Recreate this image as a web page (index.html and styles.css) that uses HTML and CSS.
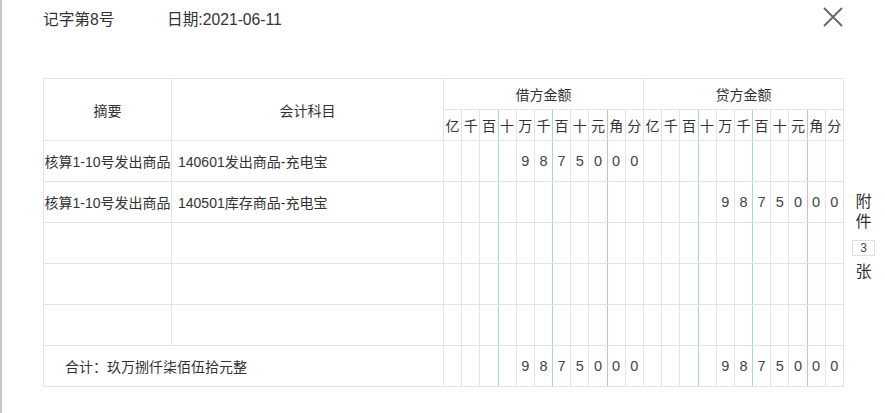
FILE: index.html
```html
<!DOCTYPE html>
<html lang="zh-CN">
<head>
<meta charset="utf-8">
<title>记字第8号</title>
<link rel="stylesheet" href="styles.css">
</head>
<body>
<div class="page">
  <div class="head">
    <span class="voucher-no">记字第8号</span>
    <span class="voucher-date">日期:2021-06-11</span>
    <span class="spacer"></span>
    <span class="close" aria-label="关闭">
      <svg width="20" height="20" viewBox="0 0 20 20"><path d="M1 1 L19 19 M19 1 L1 19" stroke="#666" stroke-width="1.8" fill="none"/></svg>
    </span>
  </div>
  <div class="body-row">
    <table class="voucher">
      <colgroup>
        <col class="c-sum"><col class="c-acc">
        <col class="c-d"><col class="c-d"><col class="c-d"><col class="c-d"><col class="c-d"><col class="c-d"><col class="c-d"><col class="c-d"><col class="c-d"><col class="c-d"><col class="c-d">
        <col class="c-d"><col class="c-d"><col class="c-d"><col class="c-d"><col class="c-d"><col class="c-d"><col class="c-d"><col class="c-d"><col class="c-d"><col class="c-d"><col class="c-d">
      </colgroup>
      <thead>
        <tr class="h1">
          <th rowspan="2" class="th-main">摘要</th>
          <th rowspan="2" class="th-main">会计科目</th>
          <th colspan="11" class="th-group">借方金额</th>
          <th colspan="11" class="th-group">贷方金额</th>
        </tr>
        <tr class="h2">
          <th class="u">亿</th><th class="u">千</th><th class="u b">百</th><th class="u">十</th><th class="u">万</th><th class="u b">千</th><th class="u">百</th><th class="u">十</th><th class="u r">元</th><th class="u">角</th><th class="u">分</th>
          <th class="u">亿</th><th class="u">千</th><th class="u b">百</th><th class="u">十</th><th class="u">万</th><th class="u b">千</th><th class="u">百</th><th class="u">十</th><th class="u r">元</th><th class="u">角</th><th class="u">分</th>
        </tr>
      </thead>
      <tbody>
        <tr class="row">
          <td class="sum">核算1-10号发出商品</td>
          <td class="acc">140601发出商品-充电宝</td>
          <td class="n"></td><td class="n"></td><td class="n b"></td><td class="n"></td><td class="n">9</td><td class="n b">8</td><td class="n">7</td><td class="n">5</td><td class="n r">0</td><td class="n">0</td><td class="n">0</td>
          <td class="n"></td><td class="n"></td><td class="n b"></td><td class="n"></td><td class="n"></td><td class="n b"></td><td class="n"></td><td class="n"></td><td class="n r"></td><td class="n"></td><td class="n"></td>
        </tr>
        <tr class="row">
          <td class="sum">核算1-10号发出商品</td>
          <td class="acc">140501库存商品-充电宝</td>
          <td class="n"></td><td class="n"></td><td class="n b"></td><td class="n"></td><td class="n"></td><td class="n b"></td><td class="n"></td><td class="n"></td><td class="n r"></td><td class="n"></td><td class="n"></td>
          <td class="n"></td><td class="n"></td><td class="n b"></td><td class="n"></td><td class="n">9</td><td class="n b">8</td><td class="n">7</td><td class="n">5</td><td class="n r">0</td><td class="n">0</td><td class="n">0</td>
        </tr>
        <tr class="row">
          <td class="sum"></td><td class="acc"></td>
          <td class="n"></td><td class="n"></td><td class="n b"></td><td class="n"></td><td class="n"></td><td class="n b"></td><td class="n"></td><td class="n"></td><td class="n r"></td><td class="n"></td><td class="n"></td>
          <td class="n"></td><td class="n"></td><td class="n b"></td><td class="n"></td><td class="n"></td><td class="n b"></td><td class="n"></td><td class="n"></td><td class="n r"></td><td class="n"></td><td class="n"></td>
        </tr>
        <tr class="row">
          <td class="sum"></td><td class="acc"></td>
          <td class="n"></td><td class="n"></td><td class="n b"></td><td class="n"></td><td class="n"></td><td class="n b"></td><td class="n"></td><td class="n"></td><td class="n r"></td><td class="n"></td><td class="n"></td>
          <td class="n"></td><td class="n"></td><td class="n b"></td><td class="n"></td><td class="n"></td><td class="n b"></td><td class="n"></td><td class="n"></td><td class="n r"></td><td class="n"></td><td class="n"></td>
        </tr>
        <tr class="row">
          <td class="sum"></td><td class="acc"></td>
          <td class="n"></td><td class="n"></td><td class="n b"></td><td class="n"></td><td class="n"></td><td class="n b"></td><td class="n"></td><td class="n"></td><td class="n r"></td><td class="n"></td><td class="n"></td>
          <td class="n"></td><td class="n"></td><td class="n b"></td><td class="n"></td><td class="n"></td><td class="n b"></td><td class="n"></td><td class="n"></td><td class="n r"></td><td class="n"></td><td class="n"></td>
        </tr>
        <tr class="row total">
          <td colspan="2" class="total-label">合计：玖万捌仟柒佰伍拾元整</td>
          <td class="n"></td><td class="n"></td><td class="n b"></td><td class="n"></td><td class="n">9</td><td class="n b">8</td><td class="n">7</td><td class="n">5</td><td class="n r">0</td><td class="n">0</td><td class="n">0</td>
          <td class="n"></td><td class="n"></td><td class="n b"></td><td class="n"></td><td class="n">9</td><td class="n b">8</td><td class="n">7</td><td class="n">5</td><td class="n r">0</td><td class="n">0</td><td class="n">0</td>
        </tr>
      </tbody>
    </table>
    <div class="attach">
      <span class="attach-txt">附</span>
      <span class="attach-txt">件</span>
      <span class="attach-box">3</span>
      <span class="attach-txt last">张</span>
    </div>
  </div>
</div>
</body>
</html>
```
FILE: styles.css
```css
html, body {
  margin: 0;
  padding: 0;
  background: #fff;
}
body {
  font-family: "Liberation Sans", "Noto Sans CJK SC", sans-serif;
  color: #333;
}
.page {
  height: 413px;
  box-sizing: border-box;
  border-left: 2px solid #c6c6c6;
  padding-left: 41px;
  padding-top: 7px;
}
.head {
  display: flex;
  align-items: flex-start;
  width: 800px;
  height: 26px;
}
.voucher-no, .voucher-date {
  font-size: 15.7px;
  line-height: 26px;
  color: #333;
}
.voucher-no {
  width: 124px;
}
.spacer {
  flex: 1;
}
.close {
  width: 20px;
  height: 20px;
  display: block;
}
.close svg {
  display: block;
}
.body-row {
  display: flex;
  align-items: center;
  margin-top: 45px;
}
.voucher {
  border-collapse: collapse;
  table-layout: fixed;
  width: 800px;
  flex: none;
}
.c-sum { width: 128px; }
.c-acc { width: 272px; }
.c-d { width: 18.18px; }
.voucher th, .voucher td {
  border: 1px solid #e3e3e3;
  padding: 0;
  font-weight: normal;
  white-space: nowrap;
  overflow: visible;
}
.h1 th {
  height: 30px;
}
.th-main {
  font-size: 14px;
  text-align: center;
}
.th-group {
  font-size: 14px;
  text-align: center;
}
.h2 th {
  height: 30px;
}
.u {
  font-size: 14px;
  text-align: center;
}
.row td {
  height: 40px;
}
.sum {
  font-size: 14px;
  text-align: center;
}
.acc {
  font-size: 14px;
  text-align: left;
  padding-left: 6px !important;
}
.n {
  font-size: 14.5px;
  text-align: center;
  color: #444;
}
.voucher .b {
  border-right-color: #a9d3ec;
}
.voucher .r {
  border-right-color: #e9b4b4;
}
.total-label {
  font-size: 14px;
  text-align: left;
  padding-left: 21px !important;
}
.attach {
  display: flex;
  flex-direction: column;
  align-items: center;
  margin-left: 8px;
  margin-top: 8px;
  width: 23px;
}
.attach-txt {
  font-size: 16px;
  line-height: 20px;
  color: #333;
}
.attach-box {
  display: block;
  box-sizing: border-box;
  width: 23px;
  height: 16px;
  border: 1px solid #e0e0e0;
  font-size: 12px;
  line-height: 14px;
  text-align: center;
  margin: 8px 0 6px;
  color: #444;
}
```
